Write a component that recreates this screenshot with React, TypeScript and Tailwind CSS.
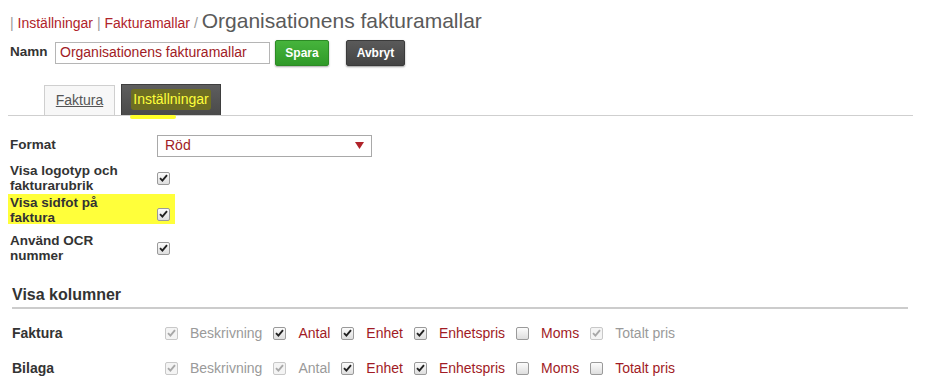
import React from "react";

type Box = "on" | "off" | "dis";

function Check({ state }: { state: Box }) {
  const dis = state === "dis";
  return (
    <span
      className={
        "inline-flex h-[13px] w-[13px] shrink-0 items-center justify-center rounded-[2px] border " +
        (dis
          ? "border-[#c8c8c8] bg-[#f4f4f4]"
          : "border-[#9a9a9a] bg-gradient-to-b from-[#fcfcfc] to-[#dedede]")
      }
    >
      {state !== "off" && (
        <svg width="9" height="8" viewBox="0 0 9 8">
          <path
            d="M1 4.2 L3.4 6.6 L8 1.2"
            fill="none"
            stroke={dis ? "#a8a8a8" : "#222"}
            strokeWidth="1.9"
          />
        </svg>
      )}
    </span>
  );
}

const cols = ["Beskrivning", "Antal", "Enhet", "Enhetspris", "Moms", "Totalt pris"];

const rows: { name: string; states: Box[] }[] = [
  { name: "Faktura", states: ["dis", "on", "on", "on", "off", "dis"] },
  { name: "Bilaga", states: ["dis", "dis", "on", "on", "off", "off"] },
];

function ColumnRow({ name, states }: { name: string; states: Box[] }) {
  return (
    <div className="flex h-[35px] items-center">
      <div className="w-[155px] pl-[2px] text-[14px] font-bold text-[#333]">{name}</div>
      <div className="flex items-center text-[14px]">
        {cols.map((c, i) => (
          <div key={c} className="mr-[11px] flex items-center">
            <Check state={states[i]} />
            <span
              className={
                "ml-[12px] " + (states[i] === "dis" ? "text-[#9a9a9a]" : "text-[#a11b25]")
              }
            >
              {c}
            </span>
          </div>
        ))}
      </div>
    </div>
  );
}

export default function App() {
  return (
    <div
      className="h-[384px] w-[940px] overflow-hidden bg-white px-[10px] text-[#333]"
      style={{ fontFamily: '"Liberation Sans", Arial, sans-serif' }}
    >
      <div className="flex items-baseline pt-[5px]">
        <span className="text-[14px] text-[#999]">|&nbsp;</span>
        <span className="text-[14px] text-[#b0232a]">Inställningar</span>
        <span className="text-[14px] text-[#999]">&nbsp;|&nbsp;</span>
        <span className="text-[14px] text-[#b0232a]">Fakturamallar</span>
        <span className="text-[14px] text-[#999]">&nbsp;/&nbsp;</span>
        <span className="text-[21px] text-[#5a5a5a]">Organisationens fakturamallar</span>
      </div>

      <div className="mt-[3px] flex items-center">
        <span className="w-[45px] text-[13.5px] font-bold text-[#333]">Namn</span>
        <div className="flex h-[22px] w-[215px] items-center border border-[#b5b5b5] px-[4px] text-[14px] text-[#a11b25]">
          Organisationens fakturamallar
        </div>
        <button className="ml-[5px] h-[26px] w-[54px] rounded-[2px] border border-[#2c8a25] bg-gradient-to-b from-[#46b43c] to-[#2f9a28] text-[12px] font-bold text-white shadow-[0_1px_2px_rgba(0,0,0,0.35)]">
          Spara
        </button>
        <button className="ml-[17px] h-[26px] w-[59px] rounded-[2px] border border-[#3a3a3a] bg-gradient-to-b from-[#5a5a5a] to-[#444] text-[12px] font-bold text-white shadow-[0_1px_2px_rgba(0,0,0,0.4)]">
          Avbryt
        </button>
      </div>

      <div className="-ml-[2px] mt-[18px] flex w-[905px] items-end border-b border-[#cfcfcf] pl-[36px]">
        <div className="flex h-[30px] w-[71px] items-center justify-center border border-b-0 border-[#cfcfcf] bg-[#f7f7f7] text-[14px] text-[#555] underline">
          Faktura
        </div>
        <div className="relative ml-[6px] flex h-[31px] w-[100px] items-center justify-center border border-b-0 border-[#3e3e3e] bg-gradient-to-b from-[#5e5e5e] to-[#4a4a4a]">
          <span className="rounded-[3px] bg-[#6e6e22] px-[2px] text-[14px] text-[#ffff3a]">
            Inställningar
          </span>
          <span className="absolute bottom-[-4px] left-[8px] h-[4px] w-[46px] rounded-full bg-[#ffff2a]" />
        </div>
      </div>

      <div className="mt-[19px] flex items-center">
        <div className="w-[147px] text-[13.5px] font-bold">Format</div>
        <div className="flex h-[22px] w-[215px] items-center justify-between border border-[#a9a9a9] px-[7px] text-[14px] text-[#a11b25]">
          <span>Röd</span>
          <svg width="9" height="7" viewBox="0 0 9 7">
            <path d="M0 0 L9 0 L4.5 7 Z" fill="#b0232a" />
          </svg>
        </div>
      </div>

      <div className="mt-[4px] flex h-[35px] items-center">
        <div className="w-[147px] text-[13.5px] font-bold leading-[15px]">
          Visa logotyp och
          <br />
          fakturarubrik
        </div>
        <Check state="on" />
      </div>
      <div className="flex h-[35px] items-center">
        <div className="-ml-[2px] -mt-[8px] flex h-[30px] w-[167px] items-start bg-[#ffff3a]">
          <div className="w-[149px] pl-[2px] pt-[1px] text-[13.5px] font-bold leading-[15px]">
            Visa sidfot på
            <br />
            faktura
          </div>
        </div>
        <div className="-ml-[18px]">
          <Check state="on" />
        </div>
      </div>
      <div className="flex h-[35px] items-center">
        <div className="w-[147px] text-[13.5px] font-bold leading-[15px]">
          Använd OCR
          <br />
          nummer
        </div>
        <Check state="on" />
      </div>

      <div className="ml-[2px] mt-[17px] w-[896px] border-b-2 border-[#cccccc] text-[16px] font-bold leading-[24px] text-[#333]">
        Visa kolumner
      </div>

      <div className="mt-[7px]">
        {rows.map((r) => (
          <ColumnRow key={r.name} name={r.name} states={r.states} />
        ))}
      </div>
    </div>
  );
}
